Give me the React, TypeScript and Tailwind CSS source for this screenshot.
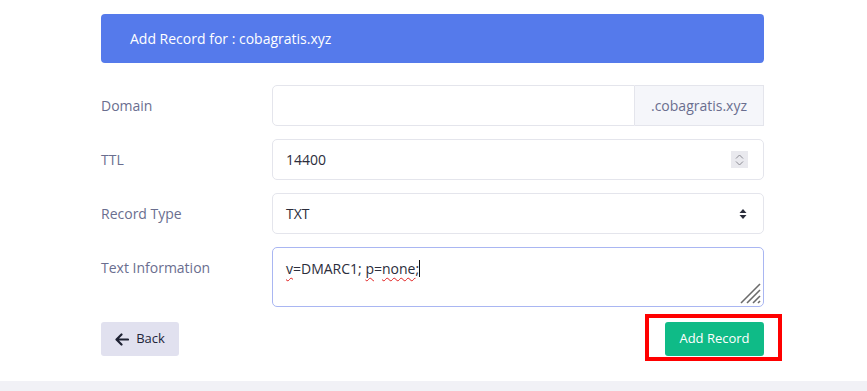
import React from "react";

function Grip() {
  return (
    <svg width="22" height="22" viewBox="0 0 22 22" className="absolute right-[2px] bottom-[2px]">
      <g stroke="#6b6b6b" strokeWidth="1.6" strokeLinecap="butt">
        <line x1="2" y1="21" x2="21" y2="2" />
        <line x1="8" y1="21" x2="21" y2="8" />
        <line x1="14" y1="21" x2="21" y2="14" />
        <line x1="19" y1="21" x2="21" y2="19" />
      </g>
    </svg>
  );
}

export default function App() {
  const font = { fontFamily: "'Open Sans', 'Liberation Sans', sans-serif" };
  return (
    <div className="min-h-[391px] bg-white flex flex-col" style={font}>
      <div className="ml-[101px] w-[663px] pt-[14px]">
        <div className="h-[49px] rounded-[4px] bg-[#557aeb] px-[29px] flex items-center text-white text-[14px]">
          Add Record for : cobagratis.xyz
        </div>

        <div className="mt-[22px] grid grid-cols-[171px_1fr] gap-y-[13px] text-[14px]">
          <div className="flex items-center text-[#6a6e8f]">Domain</div>
          <div className="flex h-[41px]">
            <div className="flex-1 border border-[#e4e5ec] rounded-l-[5px]" />
            <div className="w-[129px] flex items-center justify-center bg-[#f5f6fa] border border-l-0 border-[#e4e5ec] text-[#6a6e8f]">
              .cobagratis.xyz
            </div>
          </div>

          <div className="flex items-center text-[#6a6e8f]">TTL</div>
          <div className="h-[41px] border border-[#e4e5ec] rounded-[5px] flex items-center pl-[13px] pr-[15px] text-[#2b2d3b]">
            <span className="flex-1">14400</span>
            <div className="w-[17px] h-[17px] bg-[#e9e9ee] flex flex-col items-center justify-center gap-[2px]">
              <svg width="9" height="5" viewBox="0 0 9 5"><path d="M1 4.5 L4.5 1 L8 4.5" fill="none" stroke="#8a8a92" strokeWidth="1" /></svg>
              <svg width="9" height="5" viewBox="0 0 9 5"><path d="M1 0.5 L4.5 4 L8 0.5" fill="none" stroke="#8a8a92" strokeWidth="1" /></svg>
            </div>
          </div>

          <div className="flex items-center text-[#6a6e8f]">Record Type</div>
          <div className="h-[41px] border border-[#e4e5ec] rounded-[5px] flex items-center pl-[13px] pr-[16px] text-[#2b2d3b]">
            <span className="flex-1">TXT</span>
            <svg width="8" height="12" viewBox="0 0 8 12">
              <path d="M0.5 5 L4 1 L7.5 5 Z" fill="#2b2d3b" />
              <path d="M0.5 7 L4 11 L7.5 7 Z" fill="#2b2d3b" />
            </svg>
          </div>

          <div className="pt-[10px] text-[#6a6e8f]">Text Information</div>
          <div className="relative h-[60px] border border-[#a9b6f2] rounded-[5px] pl-[13px] pt-[10px] text-[#2b2d3b]">
            <span className="underline decoration-wavy decoration-[#e02020] decoration-1 underline-offset-[3px]">v</span>
            =DMARC1;{" "}
            <span className="underline decoration-wavy decoration-[#e02020] decoration-1 underline-offset-[3px]">p</span>
            =
            <span className="underline decoration-wavy decoration-[#e02020] decoration-1 underline-offset-[3px]">none</span>
            ;<span className="inline-block w-[1px] h-[17px] bg-[#111] align-[-3px]" />
            <Grip />
          </div>
        </div>

        <div className="mt-[15px] flex items-center justify-between">
          <div className="h-[34px] w-[78px] rounded-[3px] bg-[#e1e1ef] flex items-center justify-center gap-[7px] text-[13px] text-[#22253a]">
            <svg width="14" height="13" viewBox="0 0 14 13">
              <path d="M13 6.5 H2 M6.5 1.5 L1.5 6.5 L6.5 11.5" fill="none" stroke="#1f2233" strokeWidth="2.2" strokeLinecap="round" strokeLinejoin="round" />
            </svg>
            <span>Back</span>
          </div>
          <div className="relative">
            <div className="h-[34px] w-[99px] rounded-[3px] bg-[#0fbb87] flex items-center justify-center text-[13px] font-medium text-white">
              Add Record
            </div>
            <div className="absolute left-[-20px] top-[-8px] w-[137px] h-[47px] border-[4px] border-[#ff0000]" />
          </div>
        </div>
      </div>
      <div className="mt-[25px] flex-1 bg-[#f1f1f6]" />
    </div>
  );
}
